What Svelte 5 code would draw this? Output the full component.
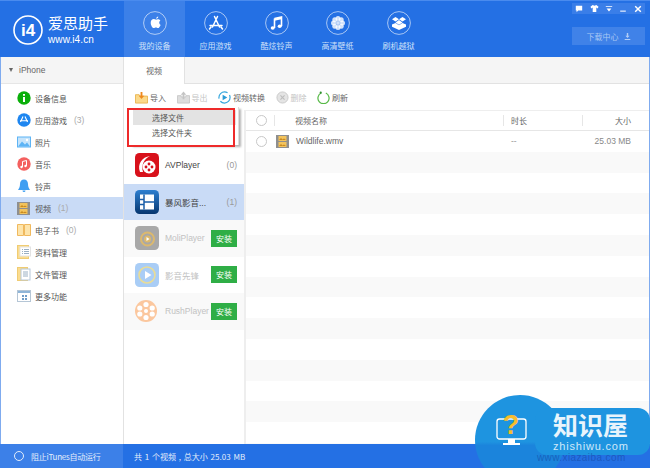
<script lang="ts">
  const navItems = [
    { label: "我的设备", icon: "apple", active: true },
    { label: "应用游戏", icon: "store" },
    { label: "酷炫铃声", icon: "note" },
    { label: "高清壁纸", icon: "flower" },
    { label: "刷机越狱", icon: "box" }
  ];

  const sideItems = [
    { label: "设备信息", icon: "info" },
    { label: "应用游戏", count: "(3)", icon: "apps" },
    { label: "照片", icon: "photo" },
    { label: "音乐", icon: "music" },
    { label: "铃声", icon: "bell" },
    { label: "视频", count: "(1)", icon: "video", active: true },
    { label: "电子书", count: "(0)", icon: "book" },
    { label: "资料管理", icon: "data" },
    { label: "文件管理", icon: "file" },
    { label: "更多功能", icon: "more" }
  ];

  const stripes = Array.from({ length: 15 }, (_, i) => i);
</script>

{#snippet filmIcon()}
  <svg viewBox="0 0 13 13" width="13" height="13">
    <rect width="13" height="13" fill="#8f8f8f" />
    <rect x="2.5" y="1" width="8" height="5" fill="#f3c35c" />
    <rect x="2.5" y="7" width="8" height="5" fill="#f3c35c" />
    <path d="M3 5l2-2 1.5 1.5L8 3.5 10 5z M3 11l2-2 1.5 1.5L8 9.5l2 1.5z" fill="#c98a1f" />
  </svg>
{/snippet}

<div class="window">
  <header class="topbar">
    <div class="brand">
      <svg class="brand-mark" viewBox="0 0 30 30" width="30" height="30">
        <circle cx="15" cy="15" r="14" fill="none" stroke="#fff" stroke-width="1.6" />
        <text x="15" y="21" text-anchor="middle" font-size="17" font-weight="700" fill="#fff" font-family="Liberation Sans, sans-serif">i4</text>
      </svg>
      <div class="brand-text">
        <div class="brand-name">爱思助手</div>
        <div class="brand-url">www.i4.cn</div>
      </div>
    </div>

    <nav class="nav">
      {#each navItems as item}
        <div class="nav-item" class:active={item.active}>
          <svg viewBox="0 0 24 24" width="24" height="24">
            <circle cx="12" cy="12" r="11.4" fill="none" stroke="rgba(255,255,255,0.6)" stroke-width="1" />
            {#if item.icon === "apple"}
              <path d="M15.200 5.500c-1 .1-2.100 1-2 2.300 1.100.1 2.100-1 2-2.300zM12.800 8.500c-.6 0-1.300-.5-2.100-.5-1.500 0-3 1.300-3 3.700 0 2.600 1.800 5.400 3.200 5.400.7 0 1.100-.5 2-.5s1.200.5 2 .5c1.100 0 2.200-1.800 2.700-3.200-1.700-.8-1.900-3.300-.2-4.300-.6-.9-1.600-1.300-2.500-1.300-.9 0-1.500.5-2.100.5z" fill="#fff" />
            {:else if item.icon === "store"}
              <path d="M10.500 5.500L15.500 16M13.500 5.500L8.500 16M6 14.500h12M5.500 18l1.500-2M18.500 18L17 16" fill="none" stroke="#fff" stroke-width="1.500" stroke-linecap="round" />
            {:else if item.icon === "note"}
              <path d="M9.500 7.500l7-1.500v9M9.500 7.500V17" fill="none" stroke="#fff" stroke-width="1.600" />
              <path d="M9.500 9.800l7-1.500V6l-7 1.500z" fill="#fff" />
              <ellipse cx="7.700" cy="17" rx="2" ry="1.700" fill="#fff" />
              <ellipse cx="14.700" cy="15.300" rx="2" ry="1.700" fill="#fff" />
            {:else if item.icon === "flower"}
              <g fill="#fff" fill-opacity="0.8">
                <circle cx="12" cy="7.500" r="2.500" />
                <circle cx="12" cy="16.500" r="2.500" />
                <circle cx="7.500" cy="12" r="2.500" />
                <circle cx="16.500" cy="12" r="2.500" />
                <circle cx="8.800" cy="8.800" r="2.500" />
                <circle cx="15.200" cy="8.800" r="2.500" />
                <circle cx="8.800" cy="15.200" r="2.500" />
                <circle cx="15.200" cy="15.200" r="2.500" />
                <circle cx="12" cy="12" r="2" />
              </g>
            {:else}
              <path d="M8.500 6l3.500 2.300L8.500 10.600 5 8.300zM15.500 6L19 8.300l-3.500 2.300L12 8.300zM8.500 11.400L12 9.100l3.500 2.300L12 13.700zM5 13.500l3.500-1.600L12 14.200l3.500-2.300 3.500 1.600v2.300L12 19l-7-3.200z" fill="#fff" />
            {/if}
          </svg>
          <span>{item.label}</span>
        </div>
      {/each}
    </nav>

    <div class="top-right">
      <div class="win-controls">
        <svg viewBox="0 0 10 10" width="8" height="8"><path d="M1 1h8v6H4L2 9V7H1z" fill="#fff" /></svg>
        <svg viewBox="0 0 10 10" width="9" height="9"><path d="M3 1L0.500 3l1 2L3 4v5h4V4l1.500 1 1-2L7 1 5 2z" fill="#fff" /></svg>
        <svg viewBox="0 0 10 10" width="8" height="8"><path d="M1 1.500h8v1H1zM2 4.500h6L5 8z" fill="#fff" /></svg>
        <svg viewBox="0 0 10 10" width="8" height="8"><path d="M1.500 7h7v1.300h-7z" fill="#fff" /></svg>
        <svg viewBox="0 0 10 10" width="8" height="8"><path d="M1.500 1.500l7 7M8.500 1.500l-7 7" stroke="#fff" stroke-width="1.800" /></svg>
      </div>
      <div class="download">
        <span>下载中心</span>
        <svg viewBox="0 0 10 10" width="7" height="7"><path d="M4 0h2v4h2L5 7 2 4h2zM1 8.500h8V10H1z" fill="rgba(255,255,255,0.6)" /></svg>
      </div>
    </div>
  </header>

  <div class="body">
    <aside class="sidebar">
      <div class="device"><i class="caret"></i>iPhone</div>
      <ul class="side-list">
        {#each sideItems as item}
          <li class="side-item" class:active={item.active}>
            <span class="side-icon">
              {#if item.icon === "info"}
                <svg viewBox="0 0 14 14" width="14" height="14"><circle cx="7" cy="7" r="6.700" fill="#0aaf0a" /><path d="M6 3h2v1.800H6zM6 6h2v5H6z" fill="#fff" /></svg>
              {:else if item.icon === "apps"}
                <svg viewBox="0 0 14 14" width="14" height="14"><circle cx="7" cy="7" r="6.700" fill="#1e86f0" /><path d="M6 3.500L3.500 9M8 3.500L10.500 9M3 7.800h8" stroke="#fff" stroke-width="1.100" fill="none" /></svg>
              {:else if item.icon === "photo"}
                <svg viewBox="0 0 14 14" width="14" height="14"><rect y="1.500" width="14" height="11" fill="#5db4f5" /><rect x="1" y="2.500" width="12" height="9" fill="#c6e4fb" /><path d="M1 11.500l4-5 3 3 2-2 3 4z" fill="#5db4f5" /><circle cx="10" cy="5" r="1.200" fill="#fff" /></svg>
              {:else if item.icon === "music"}
                <svg viewBox="0 0 14 14" width="14" height="14"><circle cx="7" cy="7" r="6.700" fill="#f4605f" /><path d="M5.500 4.500l4-1v5.500M5.500 4.500V10" stroke="#fff" stroke-width="1" fill="none" /><circle cx="4.500" cy="10" r="1.200" fill="#fff" /><circle cx="8.500" cy="9" r="1.200" fill="#fff" /></svg>
              {:else if item.icon === "bell"}
                <svg viewBox="0 0 14 14" width="14" height="14"><path d="M7 .5c-2.500 0-4 2-4 4.500 0 3-1 4.500-2 6h12c-1-1.500-2-3-2-6C11 2.500 9.500.5 7 .5z M5.500 11.500a1.500 1.500 0 0 0 3 0z" fill="#3f9ff2" /></svg>
              {:else if item.icon === "video"}
                {@render filmIcon()}
              {:else if item.icon === "book"}
                <svg viewBox="0 0 14 14" width="14" height="14"><path d="M.5 1.500h6v11h-6zM7.500 1.500h6v11h-6z" fill="#fde4ab" stroke="#f0b95e" /></svg>
              {:else if item.icon === "data"}
                <svg viewBox="0 0 14 14" width="14" height="14"><rect x=".5" y=".5" width="11" height="13" fill="#fbdc8f" stroke="#f0cc73" /><rect x="3" y="2" width="10.500" height="9" fill="#fff" stroke="#e3e3e3" /><path d="M5 4.500h1M7 4.500h5M5 6.500h1M7 6.500h5M5 8.500h1M7 8.500h5" stroke="#9ab0c4" /></svg>
              {:else if item.icon === "file"}
                <svg viewBox="0 0 14 14" width="14" height="14"><rect x=".5" y=".5" width="10" height="13" fill="#fbdc8f" stroke="#f0cc73" /><rect x="4" y="2" width="9" height="11" fill="#fff" stroke="#b6c8da" /><path d="M6 5h5M6 7h5M6 9h5" stroke="#9ab0c4" /></svg>
              {:else}
                <svg viewBox="0 0 14 14" width="14" height="14"><rect x=".5" y="1.500" width="13" height="11" fill="#fff" stroke="#b5c6d6" /><rect x="1" y="2" width="12" height="2" fill="#8fb5d8" /><path d="M5 6h2v2H5zM8 6h2v2H8zM5 9h2v2H5zM8 9h2v2H8z" fill="#6f9cc7" /></svg>
              {/if}
            </span>
            <span class="side-label">{item.label}</span>
            {#if item.count}<span class="side-count">{item.count}</span>{/if}
          </li>
        {/each}
      </ul>
    </aside>

    <main class="content">
      <div class="tabs"><div class="tab">视频</div></div>

      <div class="toolbar">
        <div class="tool">
          <svg viewBox="0 0 14 14" width="13" height="13"><path d="M.5 4h4l1 1.500h8V13H.5z" fill="#fbd98a" stroke="#e9b44f" /><path d="M6 1h2v4h2L7 8.500 4 5h2z" fill="#ef8a1e" /></svg>
          <span>导入</span>
        </div>
        <div class="tool off">
          <svg viewBox="0 0 14 14" width="13" height="13"><path d="M.5 5h4v1.500h5V5h4v8H.5z" fill="#ddd" stroke="#c8c8c8" /><path d="M6 9V4H4l3-3.500L10 4H8v5z" fill="#c4c4c4" /></svg>
          <span>导出</span>
        </div>
        <div class="tool">
          <svg viewBox="0 0 14 14" width="13" height="13"><circle cx="7" cy="7" r="6" fill="none" stroke="#35a6dd" stroke-width="1.300" stroke-dasharray="14 3" /><path d="M5 4l5 3-5 3z" fill="#2a9bd6" /></svg>
          <span>视频转换</span>
        </div>
        <div class="tool off">
          <svg viewBox="0 0 14 14" width="13" height="13"><circle cx="7" cy="7" r="6" fill="#e4e4e4" stroke="#c9c9c9" /><path d="M4.800 4.800l4.400 4.400M9.200 4.800l-4.400 4.400" stroke="#bdbdbd" stroke-width="1.200" /></svg>
          <span>删除</span>
        </div>
        <div class="tool">
          <svg viewBox="0 0 14 14" width="13" height="13"><path d="M4.500 2.200a6 6 0 1 0 5 0" fill="none" stroke="#57b947" stroke-width="1.300" /><circle cx="4" cy="1.800" r="1.200" fill="#2f8f2f" /></svg>
          <span>刷新</span>
        </div>
      </div>

      <div class="panes">
        <section class="players">
          <div class="player">
            <svg class="app-icon" viewBox="0 0 24 24" width="24" height="24">
              <rect width="24" height="24" rx="4.500" fill="#d8111b" />
              <path d="M5 19C2 11 7 4 15 3 9 6 6 12 8 19z" fill="#fff" />
              <circle cx="14" cy="14" r="6.500" fill="#fff" />
              <circle cx="14" cy="11" r="1.400" fill="#d8111b" /><circle cx="11" cy="14" r="1.400" fill="#d8111b" /><circle cx="17" cy="14" r="1.400" fill="#d8111b" /><circle cx="14" cy="17" r="1.400" fill="#d8111b" />
            </svg>
            <span class="player-name">AVPlayer</span>
            <span class="player-count">(0)</span>
          </div>
          <div class="player selected">
            <svg class="app-icon" viewBox="0 0 24 24" width="24" height="24">
              <defs>
                <linearGradient id="bf" x1="0" y1="0" x2="0" y2="1">
                  <stop offset="0" stop-color="#2d7fd0" />
                  <stop offset="1" stop-color="#06366f" />
                </linearGradient>
              </defs>
              <rect width="24" height="24" rx="4.500" fill="url(#bf)" />
              <rect x="5" y="4.500" width="14" height="15" fill="#fff" />
              <path d="M9 4.500v15M5 9.500h4M5 14.500h4M9 12h10" stroke="#1a5ea8" stroke-width="1.500" />
            </svg>
            <span class="player-name">暴风影音...</span>
            <span class="player-count">(1)</span>
          </div>
          <div class="player dim alt">
            <svg class="app-icon" viewBox="0 0 24 24" width="24" height="24">
              <rect width="24" height="24" rx="4.500" fill="#a8a8a8" />
              <circle cx="12.500" cy="13" r="6.500" fill="none" stroke="#dcb96e" stroke-width="2" />
              <circle cx="12.500" cy="13" r="3.500" fill="#dcb96e" />
              <path d="M11.500 11l3 2-3 2z" fill="#fff" />
            </svg>
            <span class="player-name">MoliPlayer</span>
            <span class="install">安装</span>
          </div>
          <div class="player dim">
            <svg class="app-icon" viewBox="0 0 24 24" width="24" height="24">
              <rect width="24" height="24" rx="4.500" fill="#a9cdf6" />
              <circle cx="12" cy="12" r="8" fill="none" stroke="#e9dc96" stroke-width="1.600" />
              <path d="M10 8l6.500 4-6.500 4z" fill="#fff" />
            </svg>
            <span class="player-name">影音先锋</span>
            <span class="install">安装</span>
          </div>
          <div class="player dim alt">
            <svg class="app-icon" viewBox="0 0 24 24" width="24" height="24">
              <circle cx="11" cy="12" r="11" fill="#fbc79e" />
              <circle cx="11" cy="12" r="2" fill="#fff" />
              <circle cx="11" cy="5.500" r="2.600" fill="#fff" /><circle cx="11" cy="18.500" r="2.600" fill="#fff" /><circle cx="4.800" cy="9" r="2.600" fill="#fff" /><circle cx="4.800" cy="15" r="2.600" fill="#fff" /><circle cx="17.200" cy="9" r="2.600" fill="#fff" /><circle cx="17.200" cy="15" r="2.600" fill="#fff" />
            </svg>
            <span class="player-name">RushPlayer</span>
            <span class="install">安装</span>
          </div>
        </section>

        <section class="table">
          <div class="thead">
            <span class="check"></span>
            <span class="col-name">视频名称</span>
            <span class="col-time">时长</span>
            <span class="col-size">大小</span>
          </div>
          <div class="row">
            <span class="check"></span>
            <span class="file-icon">{@render filmIcon()}</span>
            <span class="file-name">Wildlife.wmv</span>
            <span class="file-time">--</span>
            <span class="file-size">25.03 MB</span>
          </div>
          {#each stripes as i}
            <div class="row" class:alt={i % 2 === 0}></div>
          {/each}
        </section>
      </div>

      <div class="import-menu">
        <div class="menu-item hover">选择文件</div>
        <div class="menu-item">选择文件夹</div>
      </div>
      <div class="red-mark"></div>
    </main>
  </div>

  <footer class="statusbar">
    <div class="status-left"><i class="ring"></i>阻止iTunes自动运行</div>
    <div class="status-right">共 1 个视频 , 总大小 25.03 MB</div>
  </footer>

  <div class="watermark">
    <div class="wm-circle">
      <svg viewBox="0 0 34 42" width="34" height="42">
        <rect x="1" y="11" width="29" height="20" rx="2.500" fill="none" stroke="#fff" stroke-width="1.300" />
        <path d="M12 31h7v4h5v2H7v-2h5z" fill="#fff" />
        <text x="15" y="26" text-anchor="middle" font-size="27" font-weight="700" fill="#f6bd2c" font-family="Liberation Sans, sans-serif">?</text>
      </svg>
    </div>
    <div class="wm-pill">
      <div class="wm-title">知识屋</div>
      <div class="wm-url">zhishiwu.com</div>
    </div>
    <div class="wm-ghost">www.xiazaiba.com</div>
  </div>
</div>

<style>
  :global(body) {
    margin: 0;
  }

  .window {
    position: relative;
    width: 650px;
    height: 468px;
    display: flex;
    flex-direction: column;
    overflow: hidden;
    background: #fff;
    font-family: "Noto Sans CJK SC", "Liberation Sans", sans-serif;
    font-size: 8px;
    color: #555;
  }

  .topbar {
    height: 57px;
    flex: none;
    display: flex;
    background: #2470e4;
    border-top: 1px solid #4a8bee;
    box-sizing: border-box;
    color: #fff;
  }

  .brand {
    width: 124px;
    flex: none;
    display: flex;
    align-items: center;
    gap: 5px;
    padding: 2px 0 0 13px;
    box-sizing: border-box;
  }

  .brand-name {
    font-size: 15px;
    line-height: 16px;
  }

  .brand-url {
    margin-top: 3px;
    font-family: "Liberation Sans", sans-serif;
    font-size: 10px;
    line-height: 12px;
    letter-spacing: 0.100px;
  }

  .nav {
    display: flex;
  }

  .nav-item {
    width: 61px;
    display: flex;
    flex-direction: column;
    align-items: center;
    padding-top: 10px;
    gap: 5px;
    box-sizing: border-box;
    color: #cfe0f9;
    line-height: 11px;
  }

  .nav-item.active {
    background: #3c80e8;
  }

  .top-right {
    margin-left: auto;
    width: 78px;
    padding: 2px 5px 0 0;
    box-sizing: border-box;
    flex: none;
  }

  .win-controls {
    display: flex;
    justify-content: space-around;
    align-items: center;
    height: 11px;
    background: #3a7ee8;
  }

  .download {
    margin-top: 13px;
    height: 18px;
    display: flex;
    align-items: center;
    justify-content: center;
    gap: 5px;
    background: #4082e8;
    color: #a9c8f4;
  }

  .body {
    flex: 1;
    min-height: 0;
    display: flex;
    border-left: 1px solid #7fabef;
    border-right: 1px solid #7fabef;
  }

  .sidebar {
    width: 123px;
    flex: none;
    border-right: 1px solid #e2e2e2;
    box-sizing: border-box;
  }

  .device {
    height: 27px;
    display: flex;
    align-items: center;
    padding-left: 8px;
    background: #f5f5f5;
    border-bottom: 1px solid #e6e6e6;
    box-sizing: border-box;
    font-family: "Liberation Sans", sans-serif;
    font-size: 8.500px;
    color: #666;
  }

  .caret {
    width: 0;
    height: 0;
    margin-right: 6px;
    border-left: 2.500px solid transparent;
    border-right: 2.500px solid transparent;
    border-top: 4px solid #666;
  }

  .side-list {
    list-style: none;
    margin: 0;
    padding: 3px 0 0;
  }

  .side-item {
    height: 22px;
    display: flex;
    align-items: center;
    padding-left: 16px;
    color: #555;
  }

  .side-item.active {
    background: #c9dbf6;
  }

  .side-icon {
    width: 18px;
    display: flex;
  }

  .side-count {
    margin-left: 7px;
    color: #aaa;
    font-family: "Liberation Sans", sans-serif;
    font-size: 8.500px;
  }

  .content {
    position: relative;
    flex: 1;
    min-width: 0;
    display: flex;
    flex-direction: column;
  }

  .tabs {
    height: 27px;
    flex: none;
    display: flex;
    background: #f5f5f5;
    border-bottom: 1px solid #e2e2e2;
    box-sizing: border-box;
  }

  .tab {
    width: 61px;
    height: 27px;
    display: flex;
    align-items: center;
    justify-content: center;
    background: #fff;
    border-right: 1px solid #e2e2e2;
    box-sizing: border-box;
    color: #666;
  }

  .toolbar {
    height: 26px;
    flex: none;
    display: flex;
    align-items: center;
    padding-left: 11px;
    gap: 10.500px;
    color: #666;
  }

  .tool {
    display: flex;
    align-items: center;
    gap: 2px;
  }

  .tool.off {
    color: #c4c4c4;
  }

  .panes {
    flex: 1;
    min-height: 0;
    display: flex;
  }

  .players {
    width: 120px;
    flex: none;
    padding-top: 37px;
    border-right: 2px solid #eee;
    box-sizing: content-box;
  }

  .player {
    height: 36.500px;
    display: flex;
    align-items: center;
    padding: 0 7px 0 11px;
    box-sizing: border-box;
    font-size: 8px;
    color: #444;
  }

  .player.selected {
    background: #c9dbf6;
  }

  .player.alt {
    background: #f9f9f9;
  }

  .player.dim .player-name {
    color: #c2c2c2;
  }

  .player-name {
    margin-left: 6px;
    flex: 1;
    white-space: nowrap;
    font-family: "Liberation Sans", "Noto Sans CJK SC", sans-serif;
    font-size: 8.500px;
  }

  .player-count {
    color: #999;
    font-family: "Liberation Sans", sans-serif;
    font-size: 8.500px;
  }

  .install {
    width: 26px;
    height: 17px;
    display: flex;
    align-items: center;
    justify-content: center;
    background: #2fae46;
    color: #fff;
    flex: none;
  }

  .table {
    flex: 1;
    min-width: 0;
    overflow: hidden;
    border-top: 1px solid #eee;
  }

  .thead {
    height: 20px;
    display: flex;
    align-items: center;
    border-bottom: 1px solid #e6e6e6;
    box-sizing: border-box;
    padding-left: 10px;
    color: #666;
  }

  .check {
    width: 11px;
    height: 11px;
    flex: none;
    border: 1px solid #c8c8c8;
    border-radius: 50%;
    box-sizing: border-box;
    background: #fff;
  }

  .col-name {
    margin-left: 7px;
    padding-left: 20px;
    border-left: 1px solid #e6e6e6;
    width: 229px;
    box-sizing: border-box;
    line-height: 11px;
  }

  .col-time {
    width: 79px;
    border-left: 1px solid #e6e6e6;
    box-sizing: border-box;
    padding-left: 7px;
    line-height: 11px;
  }

  .col-size {
    width: 49px;
    border-left: 1px solid #e6e6e6;
    box-sizing: border-box;
    text-align: right;
    line-height: 11px;
  }

  .row {
    height: 20.800px;
    display: flex;
    align-items: center;
    padding-left: 10px;
    box-sizing: border-box;
  }

  .row.alt {
    background: #f9f9f9;
  }

  .file-icon {
    display: flex;
    margin-left: 9px;
  }

  .file-name {
    margin-left: 7px;
    width: 215px;
    font-family: "Liberation Sans", sans-serif;
    font-size: 8.500px;
    color: #666;
  }

  .file-time {
    width: 70px;
    color: #999;
    font-family: "Liberation Sans", sans-serif;
    font-size: 8.500px;
  }

  .file-size {
    width: 50px;
    text-align: right;
    color: #888;
    font-family: "Liberation Sans", sans-serif;
    font-size: 8.500px;
  }

  .import-menu {
    position: absolute;
    left: 7px;
    top: 50px;
    width: 108px;
    height: 38px;
    padding: 3px 2px;
    box-sizing: border-box;
    background: #fff;
    border-right: 1px solid #ddd;
    box-shadow: 2px 2px 2px rgba(0, 0, 0, 0.3);
  }

  .menu-item {
    height: 15px;
    line-height: 15px;
    padding-left: 19px;
    color: #555;
  }

  .menu-item.hover {
    background: #e3e3e3;
  }

  .red-mark {
    position: absolute;
    left: 3px;
    top: 51px;
    width: 108px;
    height: 39px;
    border: 2px solid #ee2a2a;
    box-sizing: border-box;
  }

  .statusbar {
    height: 24px;
    flex: none;
    display: flex;
    align-items: center;
    background: #2470e4;
    color: #e3edfb;
  }

  .status-left {
    width: 123px;
    height: 100%;
    flex: none;
    display: flex;
    align-items: center;
    padding-left: 14px;
    gap: 7px;
    box-sizing: border-box;
    background: #3c80e8;
    white-space: nowrap;
    letter-spacing: -0.250px;
  }

  .ring {
    width: 10px;
    height: 10px;
    border: 1px solid #e3edfb;
    border-radius: 50%;
    box-sizing: border-box;
    flex: none;
  }

  .status-right {
    padding-left: 11px;
    word-spacing: 1px;
  }

  .watermark {
    position: absolute;
    left: 475px;
    top: 395px;
    width: 175px;
    height: 73px;
  }

  .wm-circle {
    position: absolute;
    left: 0;
    top: 0;
    width: 90px;
    height: 90px;
    border-radius: 50%;
    background: linear-gradient(#1e94e0 0%, #1e94e0 52%, #1b84dc 56%);
    display: flex;
    padding: 13px 0 0 21px;
    box-sizing: border-box;
  }

  .wm-pill {
    position: absolute;
    left: 60px;
    top: 13px;
    right: 0;
    height: 47px;
    border-radius: 12px;
    background: #1e94e0;
    padding-left: 18px;
    box-sizing: border-box;
  }

  .wm-title {
    font-size: 25px;
    line-height: 26px;
    margin-top: 3px;
    font-weight: 700;
    color: #e8f4fc;
  }

  .wm-url {
    margin-top: 3px;
    font-family: "Liberation Sans", sans-serif;
    font-size: 11px;
    line-height: 12px;
    letter-spacing: 0.800px;
    color: #cfe8fa;
  }

  .wm-ghost {
    position: absolute;
    left: 62px;
    top: 58px;
    font-family: "Liberation Sans", sans-serif;
    font-size: 10px;
    line-height: 10px;
    letter-spacing: 0.400px;
    color: rgba(20, 70, 160, 0.55);
  }
</style>
